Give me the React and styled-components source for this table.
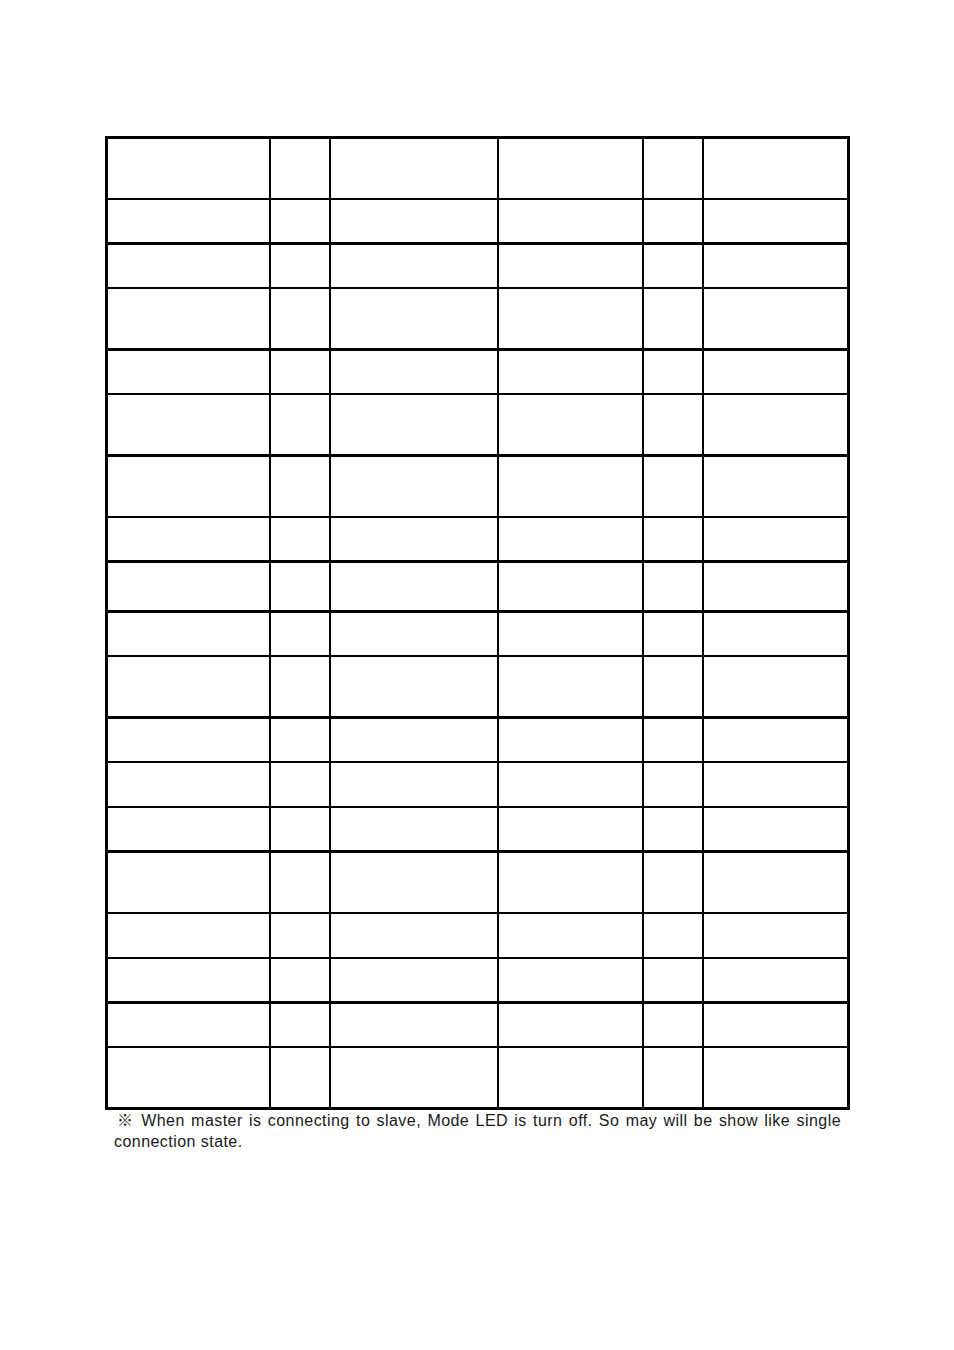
import React from 'react';
import styled, { createGlobalStyle } from 'styled-components';

const GlobalStyle = createGlobalStyle`
  html, body {
    margin: 0;
    padding: 0;
    background: #ffffff;
  }
  body {
    font-family: "Liberation Sans", Arial, "Noto Sans CJK KR", sans-serif;
    color: #000000;
  }
`;

// [content height, bottom line width]
const rows = [
  [59, 2], [42, 3], [42, 2], [59, 3], [42, 2], [59, 3], [59, 2], [42, 3],
  [47, 3], [42, 2], [59, 3], [42, 2], [43, 2], [42, 3], [59, 2], [43, 2],
  [42, 3], [42, 2], [59, 0]
];

const Styled = {
  Page: styled.div`
    width: 954px;
    min-height: 1350px;
    padding-top: 136px;
    box-sizing: border-box;
  `,
  Sheet: styled.div`
    width: 745px;
    margin-left: 105px;
  `,
  Table: styled.div`
    border: 3px solid #000;
    display: flex;
    flex-direction: column;
  `,
  Row: styled.div`
    display: grid;
    grid-template-columns: 163px 60px 168px 145px 60px 143px;
    height: ${p => p.$h}px;
    border-bottom: ${p => p.$line}px solid #000;
  `,
  Cell: styled.div`
    border-right: 2px solid #000;
    &:last-child {
      border-right: none;
    }
  `,
  Note: styled.p`
    margin: 0;
    padding: 0 9px 0 9px;
    font-size: 16px;
    letter-spacing: 0.45px;
    line-height: 21px;
    color: #1a1a1a;
    text-align: justify;
    text-indent: 3px;
  `
};

const App = () => (
  <Styled.Page>
    <GlobalStyle />
    <Styled.Sheet>
      <Styled.Table>
        {rows.map(([h, line], i) => (
          <Styled.Row key={i} $h={h} $line={line}>
            {[0, 1, 2, 3, 4, 5].map(c => (
              <Styled.Cell key={c} />
            ))}
          </Styled.Row>
        ))}
      </Styled.Table>
      <Styled.Note>
        ※ When master is connecting to slave, Mode LED is turn off. So may will be show like single
        connection state.
      </Styled.Note>
    </Styled.Sheet>
  </Styled.Page>
);

export default App;
